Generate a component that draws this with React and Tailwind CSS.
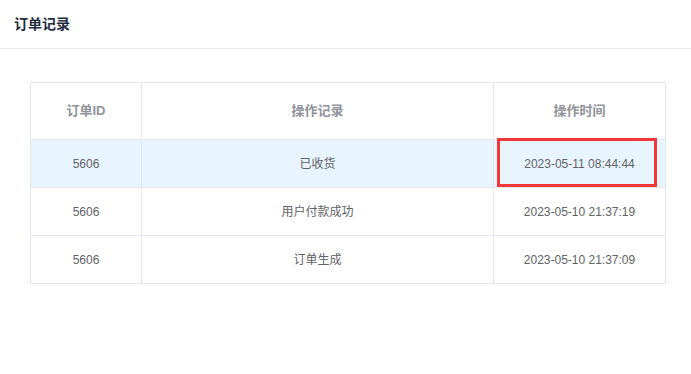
const records = [
  { id: "5606", action: "已收货", time: "2023-05-11 08:44:44", active: true },
  { id: "5606", action: "用户付款成功", time: "2023-05-10 21:37:19" },
  { id: "5606", action: "订单生成", time: "2023-05-10 21:37:09" },
];

const font = {
  fontFamily: '"Liberation Sans", "Noto Sans CJK SC", sans-serif',
};

export default function App() {
  return (
    <div className="min-h-[374px] w-full bg-white" style={font}>
      {/* 页面标题 */}
      <div className="flex h-[49px] items-center border-b border-[#e8e8e8] px-[14px]">
        <span className="text-[14px] font-bold text-[#1f2d3d]">订单记录</span>
      </div>

      {/* 操作记录表格 */}
      <div className="pl-[30px] pt-[33px]">
        <table className="w-[636px] table-fixed border-collapse border border-[#e4e7ed] text-center">
          <colgroup>
            <col className="w-[111px]" />
            <col className="w-[352px]" />
            <col />
          </colgroup>
          <thead>
            <tr className="h-[57px]">
              <th className="border border-[#e4e7ed] text-[13px] font-bold text-[#909399]">订单ID</th>
              <th className="border border-[#e4e7ed] text-[13px] font-bold text-[#909399]">操作记录</th>
              <th className="border border-[#e4e7ed] text-[13px] font-bold text-[#909399]">操作时间</th>
            </tr>
          </thead>
          <tbody>
            {records.map((r, i) => (
              <tr key={i} className={r.active ? "h-[48px] bg-[#e9f5fe]" : "h-[48px]"}>
                <td className="border border-[#e4e7ed] text-[12px] text-[#606266]">{r.id}</td>
                <td className="border border-[#e4e7ed] text-[12px] text-[#606266]">{r.action}</td>
                <td className="relative border border-[#e4e7ed] text-[12px] text-[#606266]">
                  {r.time}
                  {r.active && (
                    <div className="pointer-events-none absolute -top-[2px] bottom-0 left-[3px] right-[8px] border-[3px] border-[#f2373b]" />
                  )}
                </td>
              </tr>
            ))}
          </tbody>
        </table>
      </div>
    </div>
  );
}
